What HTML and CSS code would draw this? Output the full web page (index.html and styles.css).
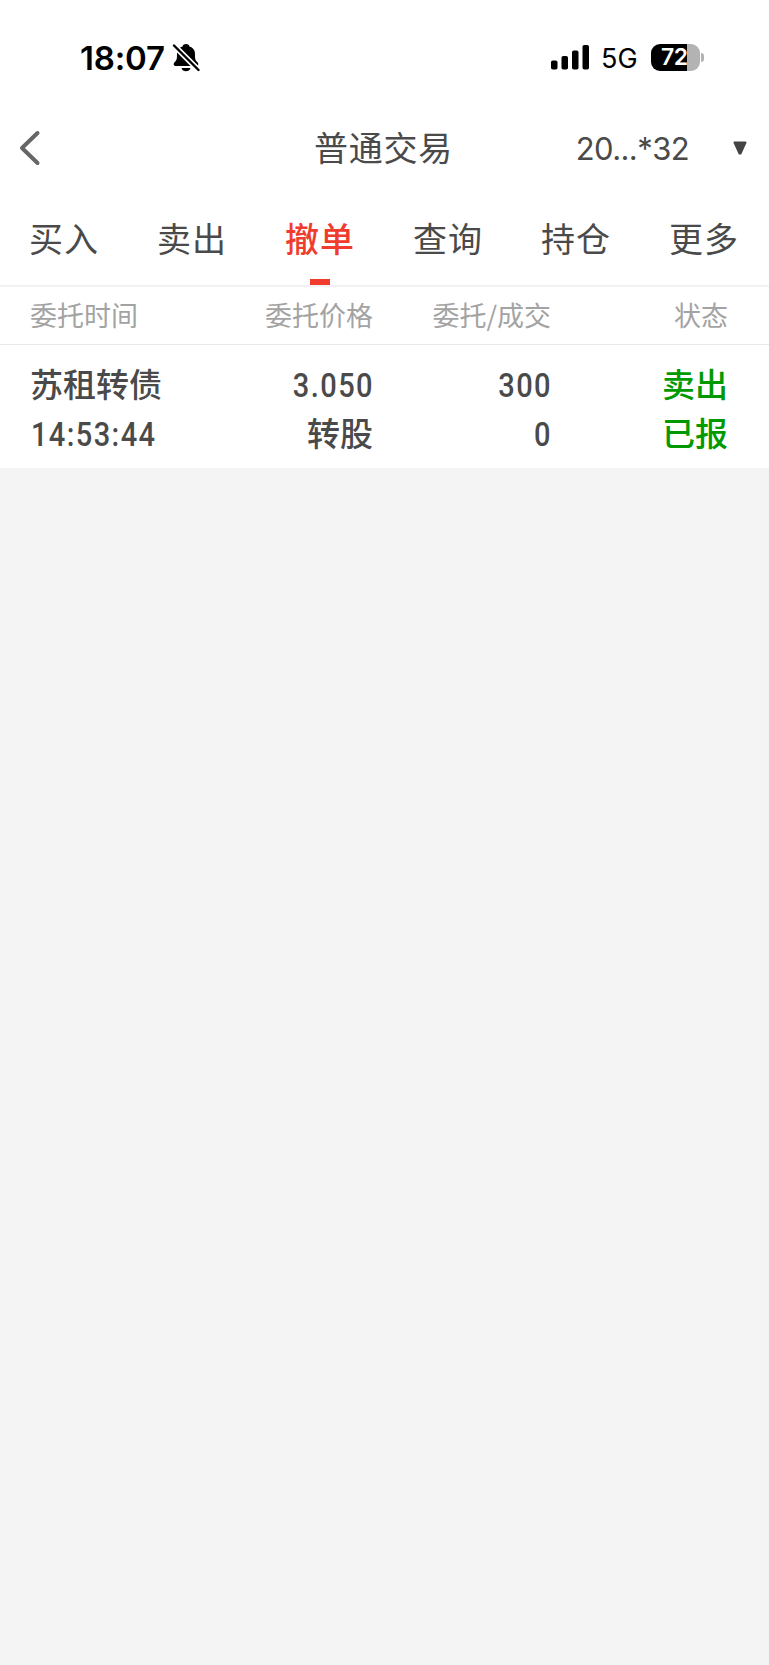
FILE: index.html
```html
<!DOCTYPE html>
<html lang="zh-CN">
<head>
<meta charset="utf-8">
<title>普通交易</title>
<link rel="stylesheet" href="styles.css">
</head>
<body>
<header class="status">
  <span class="clock">18:07</span>
  <svg class="bell" width="28" height="30" viewBox="0 0 28 30">
    <path d="M4 23C1.200 23 1.200 20.500 2.800 19C5 17 5 15 5 11C5 7 7 4.500 10.500 3.500C11.500 0.300 16.500 0.300 17.500 3.500C21 4.500 23 7 23 11C23 15 23 17 25.200 19C26.800 20.500 26.800 23 24 23ZM9.500 25H18.500C17.500 29.300 10.500 29.300 9.500 25Z"/>
    <path class="bell-gap" d="M1.500 2L27 27.500"/>
    <path class="bell-slash" d="M2 2.500L26.500 27"/>
  </svg>
  <svg class="signal" width="39" height="25" viewBox="0 0 39 25">
    <rect x="0" y="15.500" width="6.500" height="9" rx="1.800"/>
    <rect x="10.500" y="11" width="6.500" height="13.500" rx="1.800"/>
    <rect x="21" y="5.500" width="6.500" height="19" rx="1.800"/>
    <rect x="31.500" y="0" width="6.500" height="24.500" rx="1.800"/>
  </svg>
  <span class="network">5G</span>
  <span class="battery"><span class="level">72</span></span>
  <span class="battery-tip"></span>
</header>
<nav class="titlebar">
  <svg class="back" width="22" height="36" viewBox="0 0 22 36"><path d="M18.500 3L3 18L18.500 33"/></svg>
  <h1 class="title">普通交易</h1>
  <div class="account"><span>20...*32</span>
    <svg width="14" height="14" viewBox="0 0 14 14"><path d="M1.500 1.500H12.500L7.500 12.500H6.500Z"/></svg>
  </div>
</nav>
<div class="tabs">
  <span class="tab">买入</span><span class="tab">卖出</span><span class="tab active">撤单</span><span class="tab">查询</span><span class="tab">持仓</span><span class="tab">更多</span>
</div>
<div class="grid head"><span>委托时间</span><span>委托价格</span><span>委托/成交</span><span>状态</span></div>
<section class="order">
  <div class="grid line"><span>苏租转债</span><span class="num">3.050</span><span class="num">300</span><span class="sell">卖出</span></div>
  <div class="grid line"><span class="num">14:53:44</span><span>转股</span><span class="num">0</span><span class="sell">已报</span></div>
</section>
</body>
</html>
```
FILE: styles.css
```css
* { box-sizing: border-box; }
body {
  margin: 0;
  min-height: 1665px;
  background: #f4f4f4;
  color: #4a4a4a;
  font-family: "Noto Sans CJK SC", sans-serif;
}
.status {
  display: flex;
  align-items: center;
  height: 100px;
  padding: 15px 65px 0 80px;
  background: #fff;
  color: #000;
  font-family: Inter, sans-serif;
}
.clock { width: 92px; font-size: 33px; font-weight: 600; letter-spacing: -0.2px; line-height: 40px; }
.bell { margin-top: 1px; }
.bell-gap { stroke: #fff; stroke-width: 5.6; }
.bell-slash { stroke: #000; stroke-width: 2.4; stroke-linecap: round; }
.signal { margin-left: auto; margin-right: 11px; }
.network { width: 50px; padding-top: 2px; font-size: 27px; line-height: 34px; }
.battery {
  width: 49px;
  height: 27px;
  border-radius: 9px;
  overflow: hidden;
  background: linear-gradient(to right, #000 36px, #b3b3b3 36px);
  color: #fff;
}
.level { display: block; padding-left: 10px; font-size: 23px; font-weight: 600; line-height: 27px; letter-spacing: -0.5px; }
.battery-tip { width: 3px; height: 9px; margin-left: 1px; border-radius: 0 4px 4px 0; background: #b3b3b3; }
.titlebar {
  display: grid;
  grid-template-columns: 1fr auto 1fr;
  align-items: center;
  height: 96px;
  padding: 0 22px 0 19px;
  background: #fff;
}
.back { fill: none; stroke: #666; stroke-width: 4; stroke-linecap: round; stroke-linejoin: round; }
.title { margin: -3px 0 0 1px; font-size: 34px; font-weight: 400; line-height: 50px; letter-spacing: 0.8px; }
.account {
  display: flex;
  justify-content: flex-end;
  align-items: center;
  gap: 44px;
  font-family: Inter, sans-serif;
  font-size: 31px;
  letter-spacing: -0.6px;
}
.account path { fill: #444; stroke: #444; stroke-width: 2; stroke-linejoin: round; }
.tabs {
  display: grid;
  grid-template-columns: repeat(6, 128px);
  height: 91px;
  border-bottom: 2px solid #f2f2f2;
  background: #fff;
}
.tab {
  display: flex;
  flex-direction: column;
  align-items: center;
  padding-top: 17px;
  font-size: 34px;
  line-height: 50px;
  letter-spacing: 1px;
}
.active { color: #f03c2e; font-weight: 500; }
.active::after { content: ""; width: 20px; height: 6px; margin-top: 16px; background: #f03c2e; }
.grid { display: grid; grid-template-columns: 165px 178px 178px 177px; padding-left: 30px; }
.grid span { text-align: right; white-space: nowrap; }
.grid span:first-child { text-align: left; }
.head {
  height: 58px;
  border-bottom: 1px solid #e9e9e9;
  background: #fff;
  color: #a3a3a3;
  font-size: 27px;
  line-height: 55px;
}
.order { height: 123px; padding-top: 14px; background: #fff; }
.line { font-size: 33px; font-weight: 500; line-height: 49px; }
.line .num {
  margin-right: -1px;
  padding-top: 2px;
  font-family: Roboto, sans-serif;
  line-height: 47px;
  letter-spacing: 1.6px;
  transform: translateY(1px) scaleX(0.88);
  transform-origin: right;
}
.line .num:first-child { padding-left: 1px; transform-origin: left; }
.line .sell { color: #009a00; }
```
